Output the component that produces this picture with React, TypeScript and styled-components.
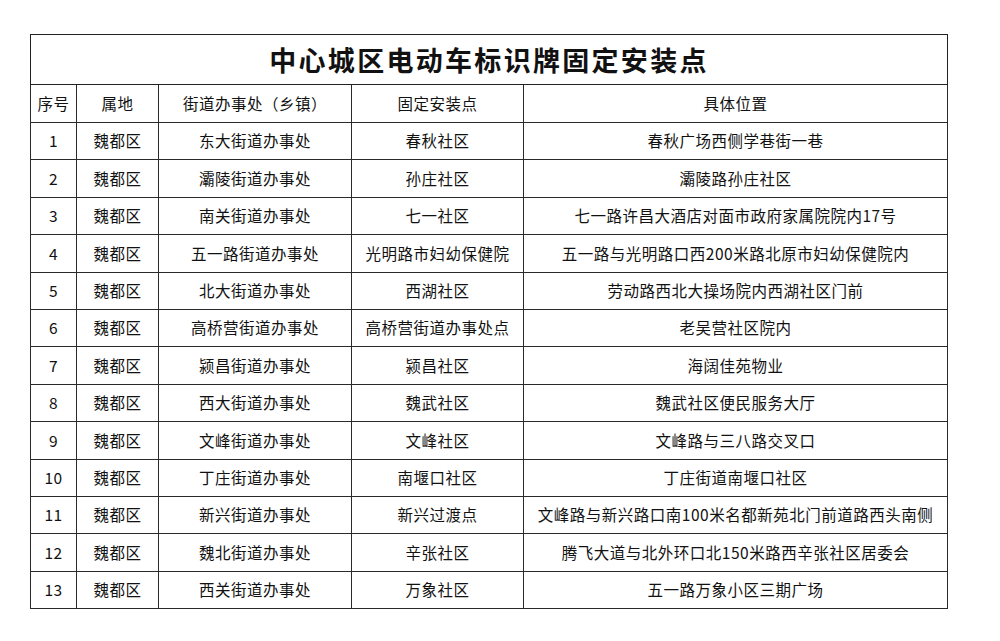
import styled, { createGlobalStyle } from "styled-components";

interface Site {
  district: string;
  street: string;
  point: string;
  address: string;
}

const sites: Site[] = [
  { district: "魏都区", street: "东大街道办事处", point: "春秋社区", address: "春秋广场西侧学巷街一巷" },
  { district: "魏都区", street: "灞陵街道办事处", point: "孙庄社区", address: "灞陵路孙庄社区" },
  { district: "魏都区", street: "南关街道办事处", point: "七一社区", address: "七一路许昌大酒店对面市政府家属院院内17号" },
  { district: "魏都区", street: "五一路街道办事处", point: "光明路市妇幼保健院", address: "五一路与光明路口西200米路北原市妇幼保健院内" },
  { district: "魏都区", street: "北大街道办事处", point: "西湖社区", address: "劳动路西北大操场院内西湖社区门前" },
  { district: "魏都区", street: "高桥营街道办事处", point: "高桥营街道办事处点", address: "老吴营社区院内" },
  { district: "魏都区", street: "颍昌街道办事处", point: "颍昌社区", address: "海阔佳苑物业" },
  { district: "魏都区", street: "西大街道办事处", point: "魏武社区", address: "魏武社区便民服务大厅" },
  { district: "魏都区", street: "文峰街道办事处", point: "文峰社区", address: "文峰路与三八路交叉口" },
  { district: "魏都区", street: "丁庄街道办事处", point: "南堰口社区", address: "丁庄街道南堰口社区" },
  { district: "魏都区", street: "新兴街道办事处", point: "新兴过渡点", address: "文峰路与新兴路口南100米名都新苑北门前道路西头南侧" },
  { district: "魏都区", street: "魏北街道办事处", point: "辛张社区", address: "腾飞大道与北外环口北150米路西辛张社区居委会" },
  { district: "魏都区", street: "西关街道办事处", point: "万象社区", address: "五一路万象小区三期广场" },
];

const headers = ["序号", "属地", "街道办事处（乡镇）", "固定安装点", "具体位置"];
const widths = [46, 82, 193, 172, 424];

const GlobalStyle = createGlobalStyle`
  body {
    margin: 0;
    background: #fff;
    font-family: "Noto Sans CJK SC", "Noto Sans", sans-serif;
  }
`;

const Page = styled.div`
  padding: 34px 0 0 30px;
`;

const Sheet = styled.table`
  border-collapse: collapse;
  table-layout: fixed;
  width: 918px;
  color: #111;
`;

const TitleCell = styled.th`
  height: 49px;
  border: 1px solid #222;
  font-size: 27px;
  font-weight: 600;
  letter-spacing: 2.3px;
  text-align: center;
  padding: 0;
`;

const Cell = styled.td<{ $head?: boolean }>`
  height: ${(p) => (p.$head ? "37px" : "36.4px")};
  border: 1px solid #2a2a2a;
  font-size: 15.5px;
  font-weight: 400;
  letter-spacing: 0.5px;
  text-align: center;
  white-space: nowrap;
  padding: 0;
  line-height: 1;
`;

export default function App() {
  return (
    <Page>
      <GlobalStyle />
      <Sheet>
        <colgroup>
          {widths.map((w, i) => (
            <col key={i} style={{ width: w }} />
          ))}
        </colgroup>
        <thead>
          <tr>
            <TitleCell colSpan={5}>中心城区电动车标识牌固定安装点</TitleCell>
          </tr>
          <tr>
            {headers.map((h) => (
              <Cell as="th" $head key={h}>
                {h}
              </Cell>
            ))}
          </tr>
        </thead>
        <tbody>
          {sites.map((s, i) => (
            <tr key={i}>
              <Cell>{i + 1}</Cell>
              <Cell>{s.district}</Cell>
              <Cell>{s.street}</Cell>
              <Cell>{s.point}</Cell>
              <Cell>{s.address}</Cell>
            </tr>
          ))}
        </tbody>
      </Sheet>
    </Page>
  );
}
